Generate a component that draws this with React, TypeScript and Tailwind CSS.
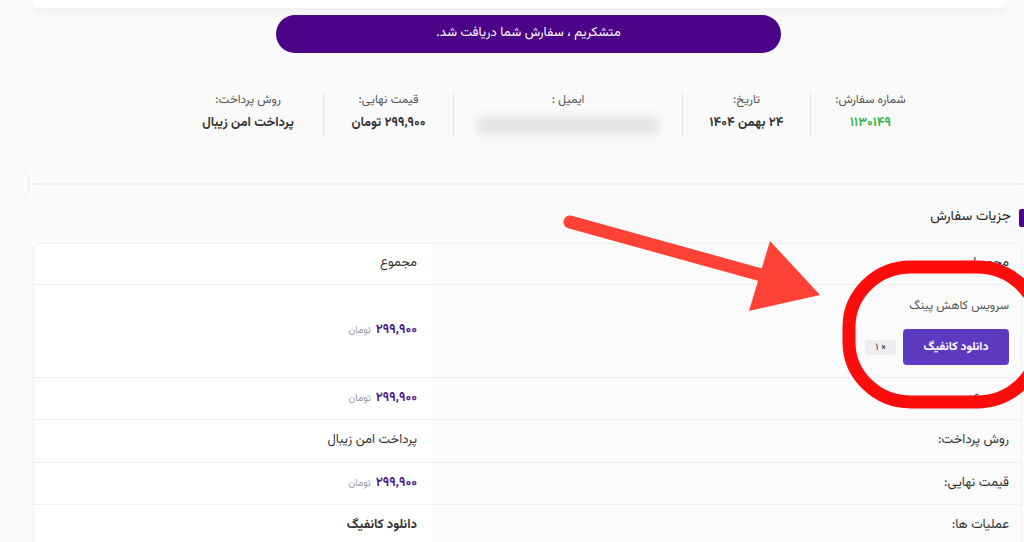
import React from "react";

const FONT = "font-['Vazirmatn','DejaVu_Sans',sans-serif]";

type InfoColumn = {
  label: string;
  value?: string;
  width: string;
  green?: boolean;
  blurred?: boolean;
  separator: boolean;
};

const infoColumns: InfoColumn[] = [
  { label: "شماره سفارش:", value: "۱۱۳۰۱۴۹", width: "w-[120px]", green: true, separator: true },
  { label: "تاریخ:", value: "۲۴ بهمن ۱۴۰۴", width: "w-[128px]", separator: true },
  { label: "ایمیل :", width: "w-[229px]", blurred: true, separator: true },
  { label: "قیمت نهایی:", value: "۲۹۹,۹۰۰ تومان", width: "w-[130px]", separator: true },
  { label: "روش پرداخت:", value: "پرداخت امن زیبال", width: "w-[150px]", separator: false },
];

function Price() {
  return (
    <span className="inline-flex items-baseline gap-[5px]">
      <span className="text-[13px] font-bold text-[#4b1d8f]">۲۹۹,۹۰۰</span>
      <span className="text-[10px] text-[#9a9a9a]">تومان</span>
    </span>
  );
}

function Row({
  label,
  children,
  height,
  last,
}: {
  label: React.ReactNode;
  children: React.ReactNode;
  height: string;
  last?: boolean;
}) {
  return (
    <div className={`flex ${height} ${last ? "" : "border-b border-[#efefef]"}`}>
      <div className="flex w-[589px] items-center bg-[#fbfbfb] pr-[12px] text-[13px] text-[#333]">
        {label}
      </div>
      <div className="flex flex-1 items-center bg-white pr-[15px] text-[13px] text-[#333]">
        {children}
      </div>
    </div>
  );
}

export default function App() {
  return (
    <div dir="rtl" className={`relative h-[542px] w-[1024px] overflow-hidden bg-[#fafafa] ${FONT}`}>
      {/* bottom edge of the card above */}
      <div className="ml-[33px] mr-[18px] h-[8px] rounded-b-[6px] bg-white shadow-[0_4px_10px_rgba(0,0,0,0.05)]" />

      <div className="flex justify-center pt-[7px]" dir="ltr">
        <div className="ml-[33px] flex h-[38px] w-[505px] items-center justify-center rounded-full bg-[#4b0387] text-[13px] text-white">
          <span dir="rtl">متشکریم ، سفارش شما دریافت شد.</span>
        </div>
      </div>

      {/* order summary */}
      <div className="mt-[39px] flex pr-[94px]">
        {infoColumns.map((col) => (
          <div
            key={col.label}
            className={`flex h-[43px] flex-col items-center ${col.width} ${
              col.separator ? "border-l border-dotted border-[#cfcfcf]" : ""
            }`}
          >
            <div className="text-[12px] leading-[16px] text-[#555]">{col.label}</div>
            {col.blurred ? (
              <div className="mt-[8px] h-[26px] w-[184px] rounded-full bg-[#e4e4e4] blur-[5px]" />
            ) : (
              <div
                className={`mt-[6px] text-[13px] font-bold leading-[18px] ${
                  col.green ? "text-[#35b84a]" : "text-[#333]"
                }`}
              >
                {col.value}
              </div>
            )}
          </div>
        ))}
      </div>

      {/* ticket divider */}
      <div dir="ltr" className="mt-[33px] flex items-center">
        <div className="-ml-[2px] h-[32px] w-[32px] shrink-0 rounded-full border-r border-[#e6e6e6] bg-[#fafafa]" />
        <div className="ml-[2px] flex-1 border-t-[2px] border-dotted border-[#e3e3e3]" />
      </div>

      {/* heading */}
      <div className="mt-[7px] flex items-center gap-[8px]">
        <div className="h-[18px] w-[5px] rounded-l-[2px] bg-[#4b0387]" />
        <div className="text-[14px] text-[#222]">جزیات سفارش</div>
      </div>

      {/* order details table */}
      <div className="ml-[33px] mr-[2px] mt-[15px] overflow-hidden rounded-t-[8px] border border-[#efefef] bg-white">
        <Row height="h-[41px]" label="محصول">
          مجموع
        </Row>
        <Row
          height="h-[93px]"
          label={
            <div className="flex flex-col items-start gap-[14px]">
              <div className="text-[12px] text-[#555]">سرویس کاهش پینگ</div>
              <div className="flex items-center gap-[7px]">
                <button className="h-[36px] w-[106px] rounded-[4px] bg-[#5d3ac0] text-[12px] font-bold text-white">
                  دانلود کانفیگ
                </button>
                <span className="rounded-[3px] bg-[#eceef2] px-[10px] text-[10px] leading-[15px] text-[#333]">
                  × ۱
                </span>
              </div>
            </div>
          }
        >
          <Price />
        </Row>
        <Row height="h-[42px]" label="مجموع:">
          <Price />
        </Row>
        <Row height="h-[43px]" label="روش پرداخت:">
          پرداخت امن زیبال
        </Row>
        <Row height="h-[42px]" label="قیمت نهایی:">
          <Price />
        </Row>
        <Row height="h-[42px]" label="عملیات ها:" last>
          <span className="font-bold">دانلود کانفیگ</span>
        </Row>
      </div>

      {/* red annotation drawn over the screenshot */}
      <svg
        className="pointer-events-none absolute left-0 top-0"
        width="1024"
        height="542"
        viewBox="0 0 1024 542"
      >
        <line x1="570" y1="222" x2="765" y2="276" stroke="#ff4136" strokeWidth="13" strokeLinecap="round" />
        <polygon points="770,241 820,295 749,311" fill="#ff4136" />
        <rect x="849" y="267" width="190" height="135" rx="62" ry="60" fill="none" stroke="#fd0c0c" strokeWidth="13" />
      </svg>
    </div>
  );
}
